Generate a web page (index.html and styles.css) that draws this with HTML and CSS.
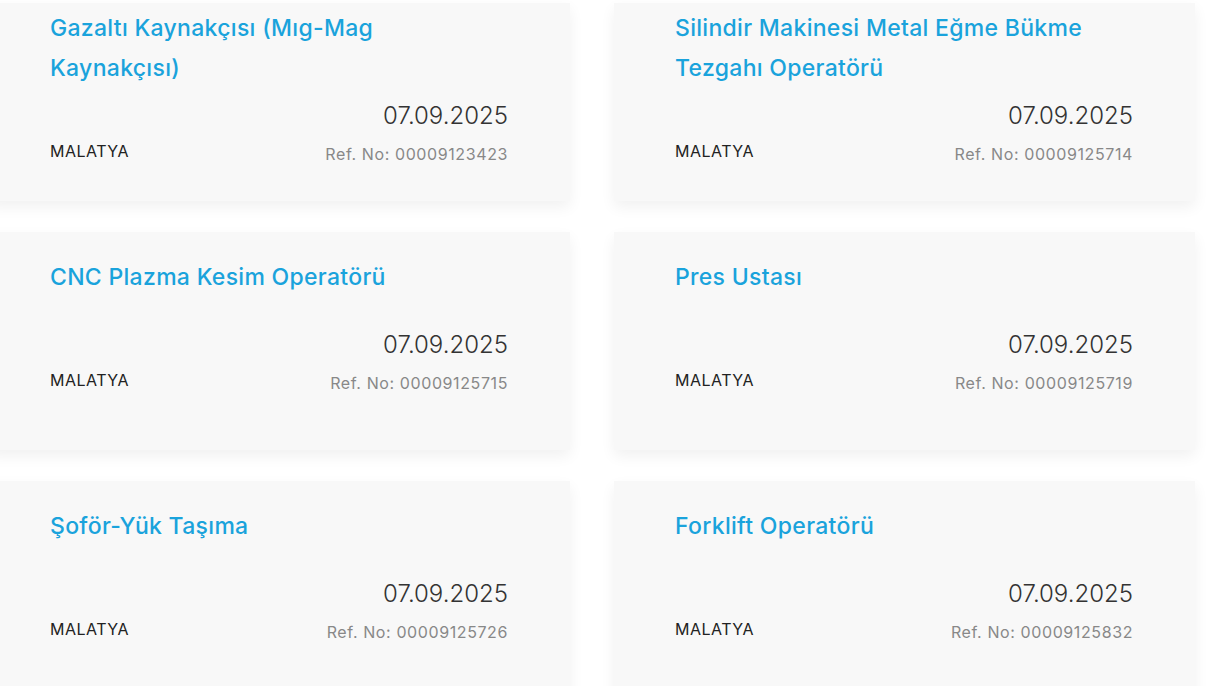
FILE: index.html
```html
<!DOCTYPE html>
<html lang="tr">
<head>
    <meta charset="UTF-8">
    <meta name="viewport" content="width=device-width, initial-scale=1.0">
    <title>İş İlanları</title>
    <link rel="stylesheet" href="styles.css">
</head>
<body>
<div class="job-list">
    <!-- Row 1 -->
    <a href="#" class="job-card">
        <div class="job-title">Gazaltı Kaynakçısı (Mıg-Mag Kaynakçısı)</div>
        <div class="job-info">
            <span class="job-city">MALATYA</span>
            <div class="job-meta">
                <div class="job-date">07.09.2025</div>
                <div class="job-ref">Ref. No: 00009123423</div>
            </div>
        </div>
    </a>
    <a href="#" class="job-card">
        <div class="job-title">Silindir Makinesi Metal Eğme Bükme Tezgahı Operatörü</div>
        <div class="job-info">
            <span class="job-city">MALATYA</span>
            <div class="job-meta">
                <div class="job-date">07.09.2025</div>
                <div class="job-ref">Ref. No: 00009125714</div>
            </div>
        </div>
    </a>

    <!-- Row 2 -->
    <a href="#" class="job-card">
        <div class="job-title">CNC Plazma Kesim Operatörü</div>
        <div class="job-info">
            <span class="job-city">MALATYA</span>
            <div class="job-meta">
                <div class="job-date">07.09.2025</div>
                <div class="job-ref">Ref. No: 00009125715</div>
            </div>
        </div>
    </a>
    <a href="#" class="job-card">
        <div class="job-title">Pres Ustası</div>
        <div class="job-info">
            <span class="job-city">MALATYA</span>
            <div class="job-meta">
                <div class="job-date">07.09.2025</div>
                <div class="job-ref">Ref. No: 00009125719</div>
            </div>
        </div>
    </a>

    <!-- Row 3 -->
    <a href="#" class="job-card">
        <div class="job-title">Şoför-Yük Taşıma</div>
        <div class="job-info">
            <span class="job-city">MALATYA</span>
            <div class="job-meta">
                <div class="job-date">07.09.2025</div>
                <div class="job-ref">Ref. No: 00009125726</div>
            </div>
        </div>
    </a>
    <a href="#" class="job-card">
        <div class="job-title">Forklift Operatörü</div>
        <div class="job-info">
            <span class="job-city">MALATYA</span>
            <div class="job-meta">
                <div class="job-date">07.09.2025</div>
                <div class="job-ref">Ref. No: 00009125832</div>
            </div>
        </div>
    </a>
</div>
</body>
</html>
```

FILE: styles.css
```css
body {
    font-family: 'Inter', 'Open Sans', sans-serif;
    background-color: white;
    margin: 0;
    padding: 0;
    overflow: hidden;
}
.job-list {
    display: grid;
    grid-template-columns: 581px 581px;
    grid-template-rows: 198px 218px 218px;
    column-gap: 44px;
    row-gap: 31px;
    padding-top: 3px;
    margin-left: -11px;
}
/* Card */
.job-card {
    display: flex;
    flex-direction: column;
    background-color: #f8f8f8;
    padding: 0 62px 0 61px;
    box-shadow: 0 6px 14px rgba(0, 0, 0, 0.06);
    text-decoration: none;
}
.job-title {
    height: 90px;
    display: flex;
    align-items: center;
    color: #1aa3dc;
    font-size: 23px;
    font-weight: 500;
    letter-spacing: 0.3px;
    line-height: 40px;
}
.job-info {
    display: flex;
    justify-content: space-between;
    align-items: flex-end;
    margin-top: 8px;
}
.job-city {
    color: #222;
    font-size: 16px;
    letter-spacing: 0.5px;
    line-height: 24px;
    margin-bottom: 3px;
}
.job-meta {
    text-align: right;
}
.job-date {
    color: #333;
    font-size: 24px;
    font-weight: 300;
    line-height: 30px;
    margin-bottom: 11px;
}
.job-ref {
    color: #888;
    font-size: 16px;
    letter-spacing: 0.6px;
    line-height: 24px;
}
```
